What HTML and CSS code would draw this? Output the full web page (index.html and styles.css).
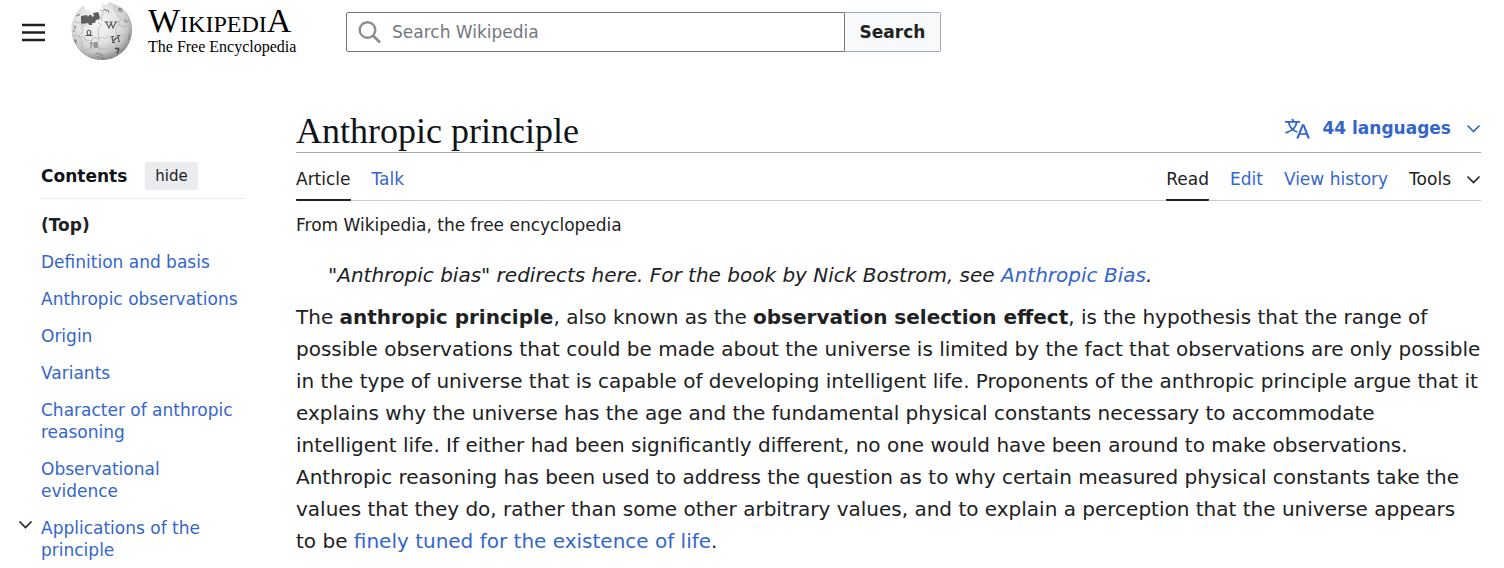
FILE: index.html
```html
<!DOCTYPE html>
<html lang="en">
<head>
<meta charset="utf-8">
<meta name="viewport" content="width=device-width, initial-scale=1">
<title>Anthropic principle - Wikipedia</title>
<link rel="stylesheet" href="styles.css">
</head>
<body>
<header class="site-header">
  <button class="menu-button" type="button" aria-label="Main menu">
    <svg width="25" height="25" viewBox="0 0 25 25" aria-hidden="true"><path d="M1 5h23M1 12.500h23M1 20h23" fill="none" stroke="#202122" stroke-width="2.500"/></svg>
  </button>
  <a class="logo" href="#" aria-label="Wikipedia, The Free Encyclopedia">
    <svg class="globe" width="62" height="60" viewBox="0 0 62 60" aria-hidden="true">
      <defs>
        <radialGradient id="shade" cx="42%" cy="36%" r="64%">
          <stop offset="0" stop-color="#f7f7f7"/><stop offset=".5" stop-color="#e6e6e6"/><stop offset=".8" stop-color="#c6c6c6"/><stop offset="1" stop-color="#8c8c8c"/>
        </radialGradient>
      </defs>
      <path d="M13 3C-1 12-3 33 6 45C14 57 29 61 42 56C58 50 65 32 59 17C57 10 50 4 43 2L38 0L36 3L31 2L29 11L22 12L19 9L14 8Z" fill="url(#shade)"/>
      <path d="M10 14l6-1 1 2c1-3 4-3 4 0l2-1-1-3 5-1 1 2 1 5-4 1-1 3-3 0 0 2-3 0-1-2-5 1-2-1z" fill="#606060"/>
      <g fill="none" stroke="#b4b4b4" stroke-width=".8">
        <path d="M4 20l6 1c0 4 5 4 5 0M1 34c4-1 7 0 8 2 3-3 6-1 5 2l7 1c0-3 3-5 5-2 2-2 7-2 8 0 2-3 5-3 6 0l9-2c1-3 5-3 5-1l6-1"/>
        <path d="M12 22c-3 4 1 5-1 9-4 2-3 5 0 7-1 5 1 9 2 14M27 21c4 0 4 5 0 5l1 12c-3 2-2 5 0 6l1 14M29 8c4 1 4 5 1 6l1 5M46 25c1-3 5-3 5 0l9-1"/>
        <path d="M44 4c-2 5 3 5 3 10 4 1 4 4 1 5v5M46 25c-4 4 1 5-1 9-4 2-3 6 0 7v12M13 48c4-2 7 0 9-1 0-4 5-5 6 0 4-1 8 1 10 0 1-3 5-3 5 0l9-2"/>
      </g>
      <g fill="none" stroke="#555" stroke-width="1.100">
        <path d="M14.500 33.500h3c-5-7 6-7 1 0h3"/>
        <path d="M35 20l3 6 2-5 2 5 3-6M33.500 20h4m1 0h3m2 0h3"/>
        <path d="M41 34.500l1 5.500m-2-5.500h3m-2 6h3m3-7l1 6m-2-6h3m-2 6h2M42 39l5-4"/>
      </g>
      <path d="M44 46.500h3.500c1 2-1 3-2 5" fill="none" stroke="#444" stroke-width="1.400"/>
      <g fill="none" stroke="#777" stroke-width=".9">
        <path d="M19 41h3m2-1l-2 3 2 2m-4-5v6m5-6v6m-2-5h4m-4 2h4m-4 2h4"/>
        <path d="M3 24l2 1m-2 1h2m-3 3h2M3 37l2 3m-2-1l3 3m-2-3l2-1M24 52l3-1 2 2 3 0M26 54l4 2h3"/>
        <path d="M7 12l2 1m-4 1l3-1M32 9l2-2 1 2 2-1 1 3M47 7c3-2 5 1 3 3l-3-2 4-1M54 17c-2 4 4 4 3 1M58 32l1 2-2 2 2 2"/>
      </g>
    </svg>
    <span class="logo-text">
      <span class="wordmark">W<span class="wordmark-small">IKIPEDI</span>A</span>
      <span class="tagline">The Free Encyclopedia</span>
    </span>
  </a>
  <form class="search" role="search">
    <label class="search-field">
      <svg width="24" height="24" viewBox="0 0 24 24" aria-hidden="true"><circle cx="9.500" cy="10" r="7.800" fill="none" stroke="#8d8d8d" stroke-width="2.400"/><path d="M15 15.500l7 7" stroke="#8d8d8d" stroke-width="2.600"/></svg>
      <input type="search" placeholder="Search Wikipedia" aria-label="Search Wikipedia">
    </label>
    <button class="search-button" type="submit">Search</button>
  </form>
</header>
<div class="page">
  <nav class="toc" aria-labelledby="toc-title">
    <div class="toc-head"><h2 id="toc-title">Contents</h2><button type="button">hide</button></div>
    <ul class="toc-list">
      <li><a class="toc-current" href="#">(Top)</a></li>
      <li><a href="#">Definition and basis</a></li>
      <li><a href="#">Anthropic observations</a></li>
      <li><a href="#">Origin</a></li>
      <li><a href="#">Variants</a></li>
      <li><a href="#">Character of anthropic reasoning</a></li>
      <li><a href="#">Observational evidence</a></li>
      <li><button class="toc-toggle" type="button" aria-label="Toggle Applications of the principle subsection"><svg width="15" height="15" viewBox="0 0 15 15" aria-hidden="true"><path d="M1.500 4.500l6 6 6-6" fill="none" stroke="currentColor" stroke-width="1.600"/></svg></button><a href="#">Applications of the principle</a></li>
    </ul>
  </nav>
  <main class="content">
    <div class="title-row">
      <h1>Anthropic principle</h1>
      <button class="languages" type="button">
        <svg width="25" height="25" viewBox="0 0 20 20" aria-hidden="true"><path fill="currentColor" d="M20 18h-1.440a.61.61 0 0 1-.4-.12.810.810 0 0 1-.23-.31L17 15h-5l-1 2.540a.770.770 0 0 1-.22.300.590.590 0 0 1-.4.140H9l4.550-11.470h1.890zm-3.530-4.310L14.890 9.500a11.620 11.620 0 0 1-.39-1.240q-.09.370-.19.690l-.19.560-1.580 4.190zm-6.300-1.580a13.430 13.430 0 0 1-2.910-1.410 11.460 11.460 0 0 0 2.810-5.370H12V4H7.310a4 4 0 0 0-.2-.560C6.870 2.790 6.600 2 6.600 2l-1.470.500s.400.890.600 1.500H0v1.330h2.150A11.230 11.230 0 0 0 5 10.700a17.190 17.190 0 0 1-5 2.100q.560.820.870 1.380a23.280 23.280 0 0 0 5.220-2.510 15.640 15.640 0 0 0 3.560 1.770zM3.630 5.330h4.910a8.110 8.110 0 0 1-2.450 4.450 9.110 9.110 0 0 1-2.460-4.450"/></svg>
        <span>44 languages</span>
        <svg width="15" height="15" viewBox="0 0 15 15" aria-hidden="true"><path d="M1.500 4.500l6 6 6-6" fill="none" stroke="currentColor" stroke-width="1.600"/></svg>
      </button>
    </div>
    <div class="tabs">
      <nav class="tab-group" aria-label="Namespaces"><a class="tab-selected" href="#">Article</a><a href="#">Talk</a></nav>
      <nav class="tab-group" aria-label="Views"><a class="tab-selected" href="#">Read</a><a href="#">Edit</a><a href="#">View history</a><button type="button">Tools <svg width="15" height="15" viewBox="0 0 15 15" aria-hidden="true"><path d="M1.500 4.500l6 6 6-6" fill="none" stroke="currentColor" stroke-width="1.600"/></svg></button></nav>
    </div>
    <p class="site-sub">From Wikipedia, the free encyclopedia</p>
    <article class="article">
      <p class="hatnote">"Anthropic bias" redirects here. For the book by Nick Bostrom, see <a href="#">Anthropic Bias</a>.</p>
      <p>The <b>anthropic principle</b>, also known as the <b>observation selection effect</b>, is the hypothesis that the range of possible observations that could be made about the universe is limited by the fact that observations are only possible in the type of universe that is capable of developing intelligent life. Proponents of the anthropic principle argue that it explains why the universe has the age and the fundamental physical constants necessary to accommodate intelligent life. If either had been significantly different, no one would have been around to make observations. Anthropic reasoning has been used to address the question as to why certain measured physical constants take the values that they do, rather than some other arbitrary values, and to explain a perception that the universe appears to be <a href="#">finely tuned for the existence of life</a>.</p>
    </article>
  </main>
</div>
</body>
</html>
```
FILE: styles.css
```css
* { box-sizing: border-box; }
body {
  margin: 0;
  background: #fff;
  color: #202122;
  font: 17px/22px "DejaVu Sans", sans-serif;
}
a { color: #36c; text-decoration: none; }
button { font: inherit; color: inherit; border: 0; padding: 0; background: none; cursor: pointer; }
svg { display: block; flex: none; }
h1, h2, p, ul { margin: 0; padding: 0; font-weight: normal; }

.site-header { display: flex; align-items: center; padding: 2px 23px 0 21px; }
.menu-button { margin-right: 25px; }
.logo { display: flex; align-items: center; gap: 15px; margin-right: 52px; color: #000; }
.logo-text { display: flex; flex-direction: column; width: 146px; padding-bottom: 2px; font-family: "Liberation Serif", serif; white-space: nowrap; }
.wordmark { font-size: 34px; line-height: 28px; }
.wordmark-small { font-size: 24px; }
.tagline { font-size: 16px; line-height: 18px; }
.search { display: flex; flex: 0 1 595px; min-width: 0; height: 40px; }
.search-field {
  display: flex; flex: 1; min-width: 0; align-items: center; gap: 10px;
  padding-left: 11px; border: 1px solid #72777d; border-radius: 2px 0 0 2px;
}
.search-field input {
  flex: 1; min-width: 0; height: 100%; padding: 0; border: 0; outline: 0;
  background: none; color: #202122; font: inherit;
}
.search-field input::placeholder { color: #72777d; opacity: 1; }
.search-button {
  width: 96px; border: 1px solid #a2a9b1; border-left: 0; border-radius: 0 2px 2px 0;
  background: #f8f9fa; font-weight: bold;
}

.page { display: grid; grid-template-columns: 205px minmax(0, 1fr); gap: 50px; padding: 44px 23px 0 41px; }
.toc { padding-top: 56px; }
.toc-head { display: flex; align-items: center; gap: 18px; padding-bottom: 8px; border-bottom: 1px solid #eaecf0; }
.toc-head h2 { color: #101418; font-size: 17px; font-weight: bold; }
.toc-head button { height: 28px; padding: 0 10px; border-radius: 2px; background: #eaecf0; font-size: 15px; }
.toc-list { display: flex; flex-direction: column; gap: 15px; padding: 15px 8px 0 0; list-style: none; }
.toc-list li { position: relative; }
.toc-list a { display: block; }
.toc-list .toc-current { color: #202122; font-weight: bold; }
.toc-toggle { position: absolute; top: 0; left: -23px; }

.title-row { display: flex; align-items: center; justify-content: space-between; height: 47px; border-bottom: 1px solid #a2a9b1; }
.title-row h1 { padding-top: 3px; color: #101418; font: 36px/44px "Liberation Serif", serif; }
.languages { display: flex; align-items: center; padding-bottom: 2px; color: #36c; font-weight: bold; }
.languages span { margin: 0 15px 0 12px; }
.tabs { display: flex; justify-content: space-between; height: 48px; border-bottom: 1px solid #c8ccd1; }
.tab-group { display: flex; gap: 21px; height: 48px; }
.tab-group a, .tab-group button { display: flex; align-items: center; gap: 15px; padding: 6px 0 0; border-bottom: 2px solid transparent; }
.tab-group .tab-selected { color: #202122; border-color: #202122; border-radius: 1px; }
.site-sub { padding-top: 13px; }
.article { padding: 23px 0 24px; font-size: 20px; line-height: 32px; }
.hatnote { margin-bottom: 10px; padding-left: 32px; font-style: italic; }
```
